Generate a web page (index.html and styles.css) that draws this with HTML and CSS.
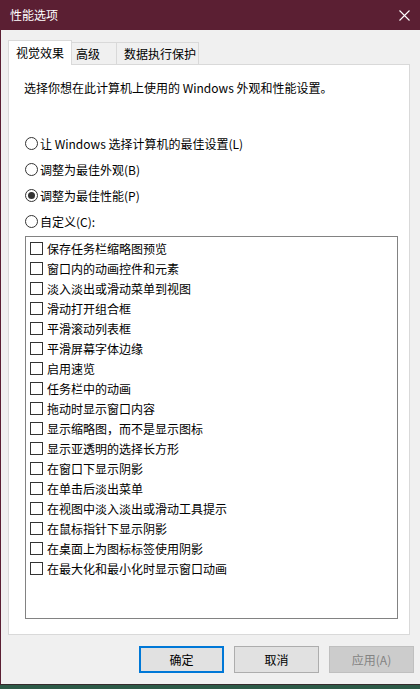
FILE: index.html
```html
<!DOCTYPE html>
<html lang="zh-CN">
<head>
<meta charset="utf-8">
<title>性能选项</title>
<link rel="stylesheet" href="styles.css">
</head>
<body>
<div class="window">
  <div class="titlebar">
    <span class="title">性能选项</span>
    <svg class="close" width="11" height="11" viewBox="0 0 11 11"><path d="M0.5 0.5L10.5 10.5M10.5 0.5L0.5 10.5" stroke="#ffffff" stroke-width="1.1" fill="none"/></svg>
  </div>
  <div class="content">
    <div class="tabs">
      <div class="tab tab-active">视觉效果</div>
      <div class="tab tab-adv">高级</div>
      <div class="tab tab-dep">数据执行保护</div>
    </div>
    <div class="panel">
      <p class="desc">选择你想在此计算机上使用的 Windows 外观和性能设置。</p>
      <div class="radios">
        <div class="radio-row"><span class="radio"></span><span>让 Windows 选择计算机的最佳设置(L)</span></div>
        <div class="radio-row"><span class="radio"></span><span>调整为最佳外观(B)</span></div>
        <div class="radio-row"><span class="radio radio-on"></span><span>调整为最佳性能(P)</span></div>
        <div class="radio-row"><span class="radio"></span><span>自定义(C):</span></div>
      </div>
      <div class="listbox">
        <div class="check-row"><span class="check"></span><span>保存任务栏缩略图预览</span></div>
        <div class="check-row"><span class="check"></span><span>窗口内的动画控件和元素</span></div>
        <div class="check-row"><span class="check"></span><span>淡入淡出或滑动菜单到视图</span></div>
        <div class="check-row"><span class="check"></span><span>滑动打开组合框</span></div>
        <div class="check-row"><span class="check"></span><span>平滑滚动列表框</span></div>
        <div class="check-row"><span class="check"></span><span>平滑屏幕字体边缘</span></div>
        <div class="check-row"><span class="check"></span><span>启用速览</span></div>
        <div class="check-row"><span class="check"></span><span>任务栏中的动画</span></div>
        <div class="check-row"><span class="check"></span><span>拖动时显示窗口内容</span></div>
        <div class="check-row"><span class="check"></span><span>显示缩略图，而不是显示图标</span></div>
        <div class="check-row"><span class="check"></span><span>显示亚透明的选择长方形</span></div>
        <div class="check-row"><span class="check"></span><span>在窗口下显示阴影</span></div>
        <div class="check-row"><span class="check"></span><span>在单击后淡出菜单</span></div>
        <div class="check-row"><span class="check"></span><span>在视图中淡入淡出或滑动工具提示</span></div>
        <div class="check-row"><span class="check"></span><span>在鼠标指针下显示阴影</span></div>
        <div class="check-row"><span class="check"></span><span>在桌面上为图标标签使用阴影</span></div>
        <div class="check-row"><span class="check"></span><span>在最大化和最小化时显示窗口动画</span></div>
      </div>
    </div>
    <div class="buttons">
      <div class="btn btn-default">确定</div>
      <div class="btn">取消</div>
      <div class="btn btn-disabled">应用(A)</div>
    </div>
  </div>
</div>
<div class="desktop"></div>
</body>
</html>
```
FILE: styles.css
```css
* { box-sizing: border-box; }
html, body { margin: 0; padding: 0; }
body {
  width: 420px;
  height: 689px;
  overflow: hidden;
  background: #2d5a47;
  font-family: "Noto Sans CJK SC", "Noto Sans", sans-serif;
  font-size: 12px;
  color: #000;
}
.window {
  width: 420px;
  height: 685px;
  background: #f0f0f0;
  border-left: 1px solid #5b1f33;
  border-bottom: 1px solid #352a2c;
}
.titlebar {
  height: 30px;
  background: #5b1f33;
  margin-left: -1px;
  display: flex;
  align-items: center;
  justify-content: space-between;
  padding: 0 10px 0 10px;
  color: #fff;
}
.title { font-size: 12px; line-height: 16px; margin-top: -1px; }
.close { display: block; }
.content { padding: 10px 0 0 7px; }
.tabs {
  display: flex;
  align-items: flex-end;
  height: 24px;
}
.tab {
  background: #f0f0f0;
  border-top: 1px solid #d9d9d9;
  border-right: 1px solid #d9d9d9;
  height: 22px;
  line-height: 21px;
  white-space: nowrap;
}
.tab-active {
  position: relative;
  z-index: 1;
  background: #fff;
  border-left: 1px solid #d9d9d9;
  height: 25px;
  margin-bottom: -1px;
  line-height: 24px;
  width: 64px;
  padding-left: 7px;
}
.tab-adv { width: 45px; padding-left: 4px; }
.tab-dep { width: 82px; padding-left: 7px; }
.panel {
  width: 402px;
  height: 571px;
  background: #fff;
  border: 1px solid #d9d9d9;
  padding: 0 0 0 15px;
}
.desc {
  margin: 15px 0 0 0;
  line-height: 16px;
  white-space: nowrap;
}
.radios { margin-top: 34px; padding-left: 1px; }
.radio-row {
  height: 26px;
  display: flex;
  align-items: center;
  gap: 2px;
  white-space: nowrap;
}
.radio {
  width: 13px;
  height: 13px;
  border: 1px solid #333;
  border-radius: 50%;
  display: flex;
  align-items: center;
  justify-content: center;
  flex: none;
}
.radio-on::after {
  content: "";
  width: 7px;
  height: 7px;
  border-radius: 50%;
  background: #333;
}
.listbox {
  margin-top: 2px;
  margin-left: 1px;
  width: 373px;
  height: 383px;
  border: 1px solid #828282;
  padding: 1px 0 0 4px;
}
.check-row {
  height: 20px;
  display: flex;
  align-items: center;
  gap: 4px;
  white-space: nowrap;
}
.check {
  width: 13px;
  height: 13px;
  border: 1px solid #333;
  background: #fff;
  flex: none;
}
.buttons {
  display: flex;
  justify-content: flex-end;
  gap: 10px;
  margin-top: 11px;
  padding-right: 6px;
}
.btn {
  width: 85px;
  height: 27px;
  background: #e1e1e1;
  border: 1px solid #adadad;
  display: flex;
  align-items: center;
  justify-content: center;
  line-height: 16px;
}
.btn-default { border: 2px solid #0078d7; }
.btn-disabled { background: #cccccc; border-color: #bfbfbf; color: #838383; }
.desktop { height: 4px; background: #2d5a47; }
```
